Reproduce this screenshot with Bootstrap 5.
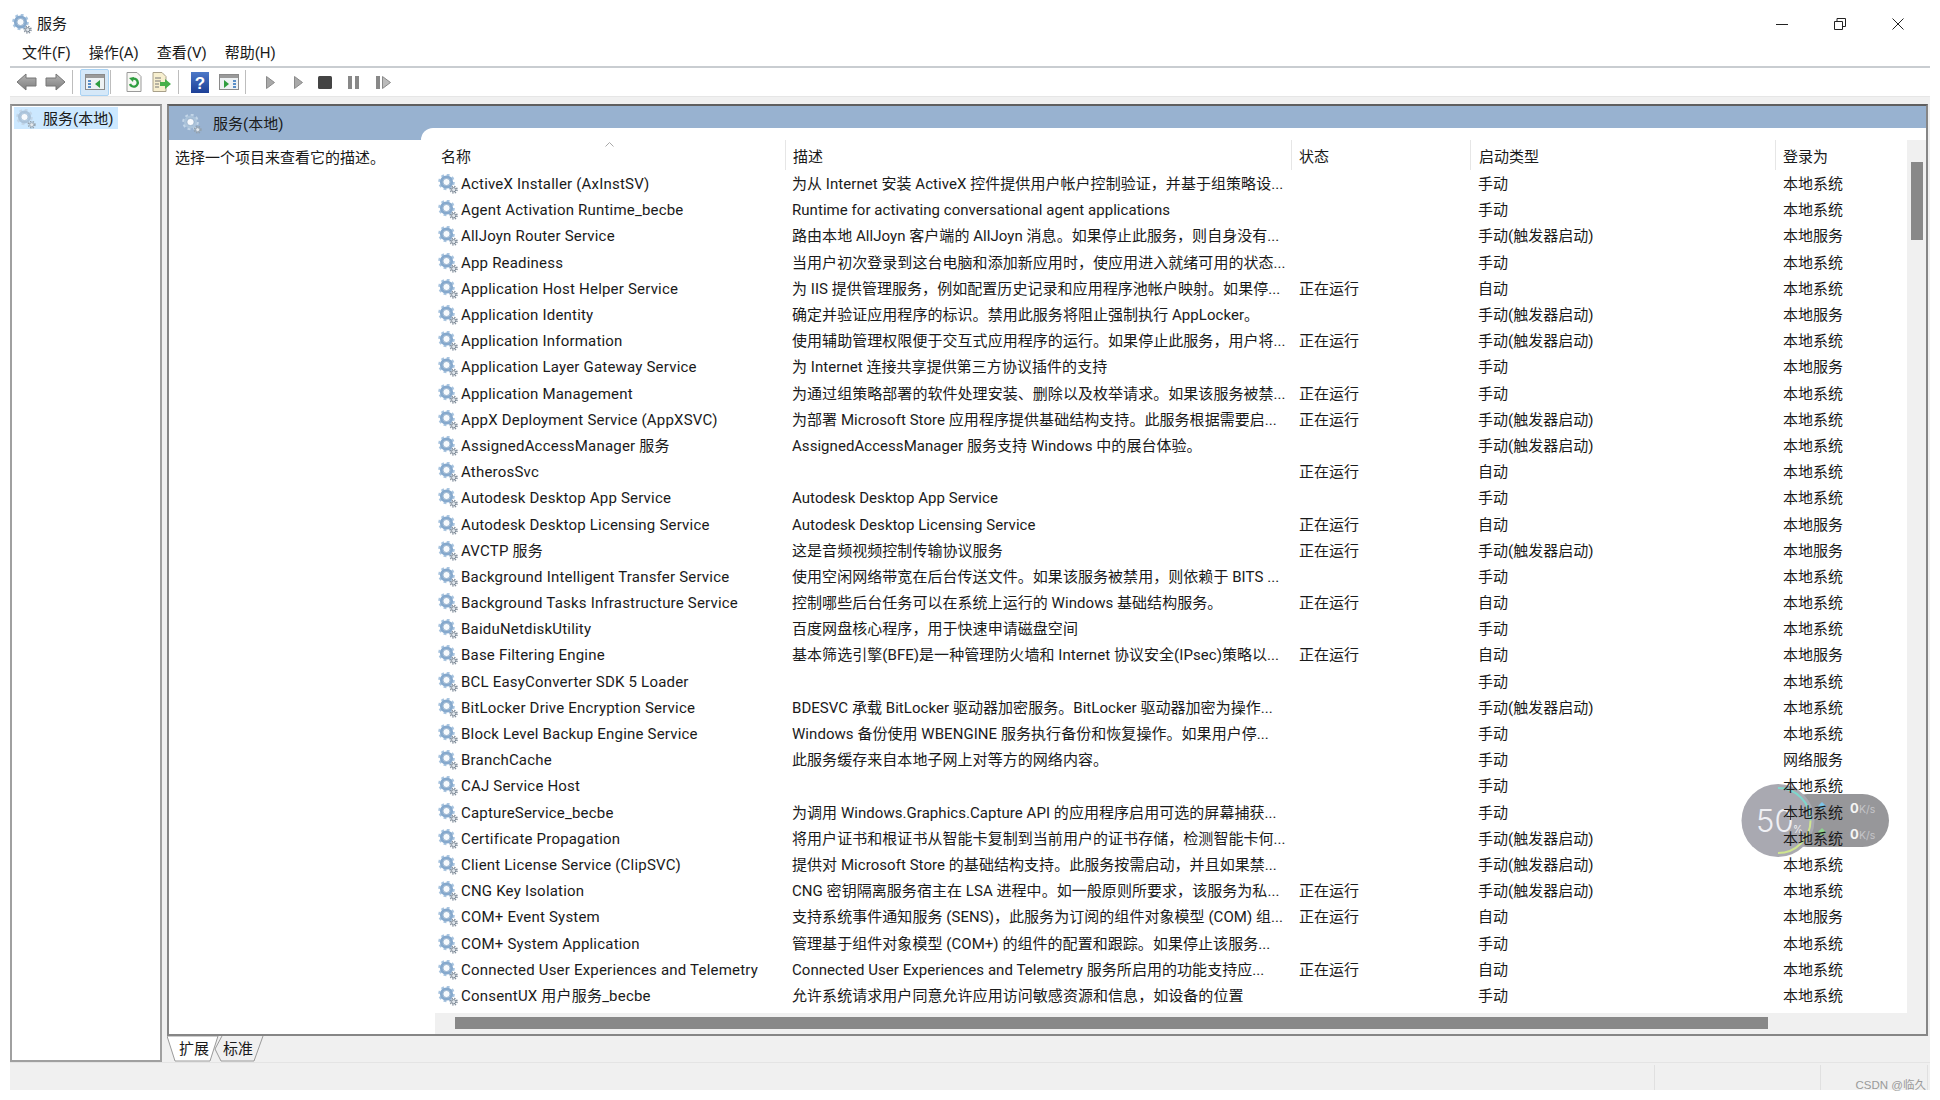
<!DOCTYPE html>
<html lang="zh-CN">
<head>
<meta charset="utf-8">
<title>服务</title>
<link href="https://cdn.jsdelivr.net/npm/bootstrap@5.3.0/dist/css/bootstrap.min.css" rel="stylesheet">
<style>
html,body{background:#fff;margin:0;height:1100px;overflow:hidden}
body{font-family:Roboto,"Noto Sans CJK SC",sans-serif;font-size:15px;color:#1a1a1a;line-height:1.2}
.win{margin-left:10px;width:1920px;height:1090px;position:relative}
.ttl{height:40px;margin-left:-10px;padding-left:12px;padding-top:8px}
.ttl-txt{margin-left:5px}
.winbtns{margin-left:auto;margin-right:26px;gap:46px}
.winbtns svg{width:12px;height:12px;display:block}
.mnu{height:28px;border-bottom:2px solid #c9cdd1;padding-left:12px;gap:18px}
.tools{height:28px;background:#fff}
.tb{display:block;flex:none}
.tsep{width:1px;height:24px;background:#bdbdbd;flex:none}
.tact{width:29px;height:27px;background:#d5e8f8;border:1px solid #a9d2f3;flex:none;border-radius:2px;margin-left:7px}
.tgap{height:8px;background:#f0f0f0;border-top:1px solid #e6e6e6}
.mainarea{height:958px;background:#f0f0f0}
.lpane{width:152px;background:#fff;border:2px solid #a0a0a0;border-top-color:#8c8c8c;padding:1px 2px;flex:none}
.ltree{background:#cce8ff;width:104px;height:22px;padding:1px 0 0 2px;gap:7px}
.rcol{width:1761px;margin-left:5px;flex:none}
.rpane{height:932px;border:2px solid #868686;border-top-color:#5f5f5f;background:#fff;flex:none}
.phead{height:34px;background:#98b2d0}
.phead-l{width:252px;padding:2px 0 0 13px;gap:11px;height:34px;flex:none}
.phead-notch{height:12px;background:#fff;border-top-left-radius:14px}
.pbody{height:894px}
.pdesc{width:266px;padding:9px 6px;flex:none}
.plist{width:1491px}
.ptop{height:873px}
.gridbox{width:1472px;flex:none}
.ghead{height:30px;position:relative;z-index:2}
.r1{width:350px;flex:none}
.r2{width:506px;flex:none}
.r3{width:179px;flex:none}
.r4{width:305px;flex:none}
.r5{width:132px;flex:none}
.ghead>div{border-left:1px solid #e6e6e6;padding:3px 0 0 7px;height:30px;display:flex;align-items:center;position:relative}
.ghead>div:first-child{border-left:0;padding-left:6px}
.ghead>.r4{padding-left:8px}
.sortmark{position:absolute;left:170px;top:2px;width:9px;height:5px}
.srow{height:26.2px;display:flex;align-items:center;white-space:nowrap;position:relative;z-index:2;padding-top:2px}
.srow>div{padding-left:7px}
.srow>.r1{padding-left:3px;display:flex;align-items:center;gap:3px;letter-spacing:.2px}
.srow>.r2{letter-spacing:.05px}
.srow>.r3,.srow>.r4,.srow>.r5{padding-left:8px}
.gicon{width:20px;height:20px;flex:none;display:block}
.vtrack{width:19px;background:#f0f0f0;flex:none;padding:22px 3px 0 4px}
.vthumb{height:78px;width:12px;background:#888}
.htrack{height:21px;background:#f0f0f0;padding:4px 0 0 20px}
.hthumb{width:1313px;height:12px;background:#888}
.tabsbar{height:26px;position:relative}
.tabsvg{position:absolute;left:0;top:0;width:110px;height:26px}
.tabtxt{position:relative;gap:14px;padding-left:12px;padding-top:4px}
.sbar{height:28px;background:#f0f0f0;border-top:1px solid #e4e4e4;position:relative}
.scell{position:absolute;top:2px;bottom:0;width:1px;background:#e0e0e0}
.sc1{left:1644px}.sc2{left:1810px}.sc3{left:1917px}
.wmark{position:absolute;right:4px;bottom:-3px;font-family:"Liberation Sans","Noto Sans CJK SC",sans-serif;font-size:11.5px;color:#9a9a9a}
.netw{position:absolute;left:1731px;top:783px;width:150px;height:75px;z-index:1}
</style>
</head>
<body>
<svg width="0" height="0" class="position-absolute">
<defs>
<symbol id="gear" viewBox="0 0 20 20">
<circle cx="8.5" cy="8" r="7" fill="none" stroke="#a9c5e0" stroke-width="2.6" stroke-dasharray="2.8 2.7"/>
<circle cx="8.5" cy="8" r="5.2" fill="none" stroke="#86a9cd" stroke-width="2.8"/>
<circle cx="8.5" cy="8" r="3.6" fill="#f7fafd" stroke="#6f94ba" stroke-width=".7"/>
<circle cx="15.7" cy="15.7" r="3.3" fill="none" stroke="#8692a0" stroke-width="1.6" stroke-dasharray="1.4 1.2"/>
<circle cx="15.7" cy="15.7" r="2.1" fill="#dfe5eb" stroke="#7d8995" stroke-width="1"/>
</symbol>
<symbol id="agear" viewBox="0 0 20 20">
<circle cx="8.5" cy="8" r="7" fill="none" stroke="#c3d6e8" stroke-width="2.6" stroke-dasharray="2.8 2.7"/>
<circle cx="8.5" cy="8" r="5.2" fill="none" stroke="#abc3da" stroke-width="2.6"/>
<circle cx="8.5" cy="8" r="3.6" fill="#f7fafd" stroke="#93adc7" stroke-width=".7"/>
<circle cx="15.7" cy="15.7" r="3.2" fill="none" stroke="#93a0ab" stroke-width="1.5" stroke-dasharray="1.4 1.2"/>
<circle cx="15.7" cy="15.7" r="2" fill="#e4e9ee" stroke="#93a0ab" stroke-width=".8"/>
</symbol>
<linearGradient id="ga" x1="0" y1="0" x2="0" y2="1"><stop offset="0" stop-color="#b4b4b4"/><stop offset="1" stop-color="#7e7e7e"/></linearGradient>
<linearGradient id="gh" x1="0" y1="0" x2="0" y2="1"><stop offset="0" stop-color="#4d79c8"/><stop offset="1" stop-color="#1c3f96"/></linearGradient>
</defs>
</svg>
<div class="win">
  <div class="ttl d-flex align-items-center">
    <svg class="gicon"><use href="#gear"/></svg><span class="ttl-txt">服务</span>
    <div class="winbtns d-flex align-items-center">
      <svg viewBox="0 0 12 12"><path d="M0 6.5H12" stroke="#222" stroke-width="1"/></svg>
      <svg viewBox="0 0 12 12"><path d="M.5 3.5H8.5V11.5H.5ZM3 3.5V.5H11.5V8.5H8.5" fill="none" stroke="#222" stroke-width="1"/></svg>
      <svg viewBox="0 0 12 12"><path d="M.5 .5L11.5 11.5M11.5 .5L.5 11.5" stroke="#222" stroke-width="1"/></svg>
    </div>
  </div>
  <div class="mnu d-flex align-items-center"><span>文件(F)</span><span>操作(A)</span><span>查看(V)</span><span>帮助(H)</span></div>
  <div class="tools d-flex align-items-center">
    <svg class="tb" style="margin-left:6px" width="21" height="20" viewBox="0 0 21 20"><path d="M1 10L10 2V6H20V14H10V18Z" fill="url(#ga)" stroke="#777"/></svg>
    <svg class="tb ms-2" width="21" height="20" viewBox="0 0 21 20"><path d="M20 10L11 2V6H1V14H11V18Z" fill="url(#ga)" stroke="#777"/></svg>
    <div class="tsep" style="margin-left:6px"></div>
    <div class="tact d-flex align-items-center justify-content-center">
      <svg width="20" height="16" viewBox="0 0 20 16"><rect x=".5" y=".5" width="19" height="15" fill="#eef2f4" stroke="#8a8a8a"/><rect x="1" y="1" width="18" height="3" fill="#9a9a9a"/><rect x="3" y="6" width="3" height="2" fill="#5a8fc8"/><rect x="3" y="9" width="3" height="2" fill="#5a8fc8"/><rect x="3" y="12" width="3" height="2" fill="#5a8fc8"/><path d="M15 6V14L10 10Z" fill="#2f9e3f"/></svg>
    </div>
    <div class="tsep" style="margin-left:1px"></div>
    <svg class="tb" style="margin-left:15px" width="16" height="20" viewBox="0 0 16 20"><path d="M1 .5H11L15 4.5V19.5H1Z" fill="#f8f8f4" stroke="#9a9a9a"/><path d="M4 12A4 4 0 1 0 6 7" fill="none" stroke="#2f9e3f" stroke-width="2.4"/><path d="M3 6L8 5L7 10Z" fill="#2f9e3f"/></svg>
    <svg class="tb" style="margin-left:10px" width="20" height="20" viewBox="0 0 20 20"><path d="M1 .5H10L14 4.5V19.5H1Z" fill="#f7efcf" stroke="#a8a08a"/><path d="M3 6H9M3 9H9M3 12H7M3 15H7" stroke="#777"/><path d="M8 10H13V7L19 12L13 17V14H8Z" fill="#46b04a"/></svg>
    <div class="tsep" style="margin-left:6px"></div>
    <svg class="tb" style="margin-left:12px" width="18" height="21" viewBox="0 0 18 21"><rect width="18" height="21" fill="url(#gh)"/><text x="9" y="16.5" text-anchor="middle" font-family="Liberation Sans" font-weight="700" font-size="17" fill="#fff">?</text></svg>
    <svg class="tb" style="margin-left:10px" width="20" height="16" viewBox="0 0 20 16"><rect x=".5" y=".5" width="19" height="15" fill="#eef2f4" stroke="#8a8a8a"/><rect x="1" y="1" width="18" height="3" fill="#9a9a9a"/><path d="M5 6V14L10 10Z" fill="#2f9e3f"/><rect x="14" y="6" width="3" height="2" fill="#5a8fc8"/><rect x="14" y="9" width="3" height="2" fill="#5a8fc8"/><rect x="14" y="12" width="3" height="2" fill="#5a8fc8"/></svg>
    <div class="tsep" style="margin-left:6px"></div>
    <svg class="tb" style="margin-left:20px" width="9" height="13" viewBox="0 0 9 13"><path d="M.5 .5L8.5 6.5L.5 12.5Z" fill="#a9a9a9" stroke="#8a8a8a"/></svg>
    <svg class="tb" style="margin-left:19px" width="9" height="13" viewBox="0 0 9 13"><path d="M.5 .5L8.5 6.5L.5 12.5Z" fill="#a9a9a9" stroke="#8a8a8a"/></svg>
    <svg class="tb" style="margin-left:15px" width="14" height="13" viewBox="0 0 14 13"><rect width="14" height="13" rx="1.5" fill="#444"/></svg>
    <svg class="tb" style="margin-left:16px" width="11" height="13" viewBox="0 0 11 13"><rect width="4" height="13" fill="#888"/><rect x="7" width="4" height="13" fill="#888"/></svg>
    <svg class="tb" style="margin-left:17px" width="15" height="13" viewBox="0 0 15 13"><rect width="4" height="13" fill="#888"/><path d="M6.5 .5L14.5 6.5L6.5 12.5Z" fill="#bbb" stroke="#8a8a8a"/></svg>
  </div>
  <div class="tgap"></div>
  <div class="mainarea d-flex">
    <div class="lpane"><div class="ltree d-flex align-items-center"><svg class="gicon"><use href="#agear"/></svg><span>服务(本地)</span></div></div>
    <div class="rcol d-flex flex-column">
      <div class="rpane d-flex flex-column">
        <div class="phead d-flex">
          <div class="phead-l d-flex align-items-center"><svg class="gicon"><use href="#agear"/></svg><span>服务(本地)</span></div>
          <div class="phead-notch flex-grow-1 align-self-end"></div>
        </div>
        <div class="pbody d-flex">
          <div class="pdesc">选择一个项目来查看它的描述。</div>
          <div class="plist d-flex flex-column">
            <div class="ptop d-flex">
              <div class="gridbox">
                <div class="ghead d-flex">
                  <div class="r1">名称<svg class="sortmark" viewBox="0 0 9 5"><path d="M.5 4.5L4.5 .5L8.5 4.5" fill="none" stroke="#a8a8a8"/></svg></div><div class="r2">描述</div><div class="r3">状态</div><div class="r4">启动类型</div><div class="r5">登录为</div>
                </div>
                <div class="srow"><div class="r1"><svg class="gicon"><use href="#gear"/></svg>ActiveX Installer (AxInstSV)</div><div class="r2">为从 Internet 安装 ActiveX 控件提供用户帐户控制验证，并基于组策略设...</div><div class="r3"></div><div class="r4">手动</div><div class="r5">本地系统</div></div>
                <div class="srow"><div class="r1"><svg class="gicon"><use href="#gear"/></svg>Agent Activation Runtime_becbe</div><div class="r2">Runtime for activating conversational agent applications</div><div class="r3"></div><div class="r4">手动</div><div class="r5">本地系统</div></div>
                <div class="srow"><div class="r1"><svg class="gicon"><use href="#gear"/></svg>AllJoyn Router Service</div><div class="r2">路由本地 AllJoyn 客户端的 AllJoyn 消息。如果停止此服务，则自身没有...</div><div class="r3"></div><div class="r4">手动(触发器启动)</div><div class="r5">本地服务</div></div>
                <div class="srow"><div class="r1"><svg class="gicon"><use href="#gear"/></svg>App Readiness</div><div class="r2">当用户初次登录到这台电脑和添加新应用时，使应用进入就绪可用的状态...</div><div class="r3"></div><div class="r4">手动</div><div class="r5">本地系统</div></div>
                <div class="srow"><div class="r1"><svg class="gicon"><use href="#gear"/></svg>Application Host Helper Service</div><div class="r2">为 IIS 提供管理服务，例如配置历史记录和应用程序池帐户映射。如果停...</div><div class="r3">正在运行</div><div class="r4">自动</div><div class="r5">本地系统</div></div>
                <div class="srow"><div class="r1"><svg class="gicon"><use href="#gear"/></svg>Application Identity</div><div class="r2">确定并验证应用程序的标识。禁用此服务将阻止强制执行 AppLocker。</div><div class="r3"></div><div class="r4">手动(触发器启动)</div><div class="r5">本地服务</div></div>
                <div class="srow"><div class="r1"><svg class="gicon"><use href="#gear"/></svg>Application Information</div><div class="r2">使用辅助管理权限便于交互式应用程序的运行。如果停止此服务，用户将...</div><div class="r3">正在运行</div><div class="r4">手动(触发器启动)</div><div class="r5">本地系统</div></div>
                <div class="srow"><div class="r1"><svg class="gicon"><use href="#gear"/></svg>Application Layer Gateway Service</div><div class="r2">为 Internet 连接共享提供第三方协议插件的支持</div><div class="r3"></div><div class="r4">手动</div><div class="r5">本地服务</div></div>
                <div class="srow"><div class="r1"><svg class="gicon"><use href="#gear"/></svg>Application Management</div><div class="r2">为通过组策略部署的软件处理安装、删除以及枚举请求。如果该服务被禁...</div><div class="r3">正在运行</div><div class="r4">手动</div><div class="r5">本地系统</div></div>
                <div class="srow"><div class="r1"><svg class="gicon"><use href="#gear"/></svg>AppX Deployment Service (AppXSVC)</div><div class="r2">为部署 Microsoft Store 应用程序提供基础结构支持。此服务根据需要启...</div><div class="r3">正在运行</div><div class="r4">手动(触发器启动)</div><div class="r5">本地系统</div></div>
                <div class="srow"><div class="r1"><svg class="gicon"><use href="#gear"/></svg>AssignedAccessManager 服务</div><div class="r2">AssignedAccessManager 服务支持 Windows 中的展台体验。</div><div class="r3"></div><div class="r4">手动(触发器启动)</div><div class="r5">本地系统</div></div>
                <div class="srow"><div class="r1"><svg class="gicon"><use href="#gear"/></svg>AtherosSvc</div><div class="r2"></div><div class="r3">正在运行</div><div class="r4">自动</div><div class="r5">本地系统</div></div>
                <div class="srow"><div class="r1"><svg class="gicon"><use href="#gear"/></svg>Autodesk Desktop App Service</div><div class="r2">Autodesk Desktop App Service</div><div class="r3"></div><div class="r4">手动</div><div class="r5">本地系统</div></div>
                <div class="srow"><div class="r1"><svg class="gicon"><use href="#gear"/></svg>Autodesk Desktop Licensing Service</div><div class="r2">Autodesk Desktop Licensing Service</div><div class="r3">正在运行</div><div class="r4">自动</div><div class="r5">本地服务</div></div>
                <div class="srow"><div class="r1"><svg class="gicon"><use href="#gear"/></svg>AVCTP 服务</div><div class="r2">这是音频视频控制传输协议服务</div><div class="r3">正在运行</div><div class="r4">手动(触发器启动)</div><div class="r5">本地服务</div></div>
                <div class="srow"><div class="r1"><svg class="gicon"><use href="#gear"/></svg>Background Intelligent Transfer Service</div><div class="r2">使用空闲网络带宽在后台传送文件。如果该服务被禁用，则依赖于 BITS ...</div><div class="r3"></div><div class="r4">手动</div><div class="r5">本地系统</div></div>
                <div class="srow"><div class="r1"><svg class="gicon"><use href="#gear"/></svg>Background Tasks Infrastructure Service</div><div class="r2">控制哪些后台任务可以在系统上运行的 Windows 基础结构服务。</div><div class="r3">正在运行</div><div class="r4">自动</div><div class="r5">本地系统</div></div>
                <div class="srow"><div class="r1"><svg class="gicon"><use href="#gear"/></svg>BaiduNetdiskUtility</div><div class="r2">百度网盘核心程序，用于快速申请磁盘空间</div><div class="r3"></div><div class="r4">手动</div><div class="r5">本地系统</div></div>
                <div class="srow"><div class="r1"><svg class="gicon"><use href="#gear"/></svg>Base Filtering Engine</div><div class="r2">基本筛选引擎(BFE)是一种管理防火墙和 Internet 协议安全(IPsec)策略以...</div><div class="r3">正在运行</div><div class="r4">自动</div><div class="r5">本地服务</div></div>
                <div class="srow"><div class="r1"><svg class="gicon"><use href="#gear"/></svg>BCL EasyConverter SDK 5 Loader</div><div class="r2"></div><div class="r3"></div><div class="r4">手动</div><div class="r5">本地系统</div></div>
                <div class="srow"><div class="r1"><svg class="gicon"><use href="#gear"/></svg>BitLocker Drive Encryption Service</div><div class="r2">BDESVC 承载 BitLocker 驱动器加密服务。BitLocker 驱动器加密为操作...</div><div class="r3"></div><div class="r4">手动(触发器启动)</div><div class="r5">本地系统</div></div>
                <div class="srow"><div class="r1"><svg class="gicon"><use href="#gear"/></svg>Block Level Backup Engine Service</div><div class="r2">Windows 备份使用 WBENGINE 服务执行备份和恢复操作。如果用户停...</div><div class="r3"></div><div class="r4">手动</div><div class="r5">本地系统</div></div>
                <div class="srow"><div class="r1"><svg class="gicon"><use href="#gear"/></svg>BranchCache</div><div class="r2">此服务缓存来自本地子网上对等方的网络内容。</div><div class="r3"></div><div class="r4">手动</div><div class="r5">网络服务</div></div>
                <div class="srow"><div class="r1"><svg class="gicon"><use href="#gear"/></svg>CAJ Service Host</div><div class="r2"></div><div class="r3"></div><div class="r4">手动</div><div class="r5">本地系统</div></div>
                <div class="srow"><div class="r1"><svg class="gicon"><use href="#gear"/></svg>CaptureService_becbe</div><div class="r2">为调用 Windows.Graphics.Capture API 的应用程序启用可选的屏幕捕获...</div><div class="r3"></div><div class="r4">手动</div><div class="r5">本地系统</div></div>
                <div class="srow"><div class="r1"><svg class="gicon"><use href="#gear"/></svg>Certificate Propagation</div><div class="r2">将用户证书和根证书从智能卡复制到当前用户的证书存储，检测智能卡何...</div><div class="r3"></div><div class="r4">手动(触发器启动)</div><div class="r5">本地系统</div></div>
                <div class="srow"><div class="r1"><svg class="gicon"><use href="#gear"/></svg>Client License Service (ClipSVC)</div><div class="r2">提供对 Microsoft Store 的基础结构支持。此服务按需启动，并且如果禁...</div><div class="r3"></div><div class="r4">手动(触发器启动)</div><div class="r5">本地系统</div></div>
                <div class="srow"><div class="r1"><svg class="gicon"><use href="#gear"/></svg>CNG Key Isolation</div><div class="r2">CNG 密钥隔离服务宿主在 LSA 进程中。如一般原则所要求，该服务为私...</div><div class="r3">正在运行</div><div class="r4">手动(触发器启动)</div><div class="r5">本地系统</div></div>
                <div class="srow"><div class="r1"><svg class="gicon"><use href="#gear"/></svg>COM+ Event System</div><div class="r2">支持系统事件通知服务 (SENS)，此服务为订阅的组件对象模型 (COM) 组...</div><div class="r3">正在运行</div><div class="r4">自动</div><div class="r5">本地服务</div></div>
                <div class="srow"><div class="r1"><svg class="gicon"><use href="#gear"/></svg>COM+ System Application</div><div class="r2">管理基于组件对象模型 (COM+) 的组件的配置和跟踪。如果停止该服务...</div><div class="r3"></div><div class="r4">手动</div><div class="r5">本地系统</div></div>
                <div class="srow"><div class="r1"><svg class="gicon"><use href="#gear"/></svg>Connected User Experiences and Telemetry</div><div class="r2">Connected User Experiences and Telemetry 服务所启用的功能支持应...</div><div class="r3">正在运行</div><div class="r4">自动</div><div class="r5">本地系统</div></div>
                <div class="srow"><div class="r1"><svg class="gicon"><use href="#gear"/></svg>ConsentUX 用户服务_becbe</div><div class="r2">允许系统请求用户同意允许应用访问敏感资源和信息，如设备的位置</div><div class="r3"></div><div class="r4">手动</div><div class="r5">本地系统</div></div>
              </div>
              <div class="vtrack"><div class="vthumb"></div></div>
            </div>
            <div class="htrack"><div class="hthumb"></div></div>
          </div>
        </div>
      </div>
      <div class="tabsbar">
        <svg class="tabsvg" viewBox="0 0 110 26"><path d="M0 0L8 25H43L51 0Z" fill="#fff" stroke="#9a9a9a"/><path d="M48 13L54 25H87L96 0M48 13L55 0" fill="#f0f0f0" stroke="#9a9a9a"/></svg>
        <div class="tabtxt d-flex"><span>扩展</span><span>标准</span></div>
      </div>
    </div>
  </div>
  <div class="sbar"><div class="scell sc1"></div><div class="scell sc2"></div><div class="scell sc3"></div></div>
  <div class="netw">
    <svg width="150" height="75" viewBox="0 0 150 75">
      <rect x="40" y="11" width="108" height="53" rx="26.5" fill="#97979a"/>
      <circle cx="37" cy="37.5" r="36.5" fill="#a9a9b1"/>
      <path d="M37 5A32.5 32.5 0 0 1 69.5 37.5" fill="none" stroke="#7fd6cc" stroke-width="2"/>
      <path d="M69.5 37.5A32.5 32.5 0 0 1 37 70" fill="none" stroke="#cfe58f" stroke-width="2"/>
      <text x="15" y="49" font-family="Inter" font-weight="300" font-size="31" fill="#f0f0f4">50</text>
      <text x="52" y="50" font-family="Inter" font-size="10" fill="#f0f0f4">%</text>
      <path d="M81 19L85 23L81 27L77 23Z" fill="#7cc4ea"/>
      <path d="M81 45L85 49L81 53L77 49Z" fill="#8fd28f"/>
      <text x="109" y="30" font-family="Inter" font-weight="700" font-size="13" fill="#f4f4f4">0</text>
      <text x="118" y="30" font-family="Inter" font-size="10.5" fill="#c4c4c8">K/s</text>
      <text x="109" y="56" font-family="Inter" font-weight="700" font-size="13" fill="#f4f4f4">0</text>
      <text x="118" y="56" font-family="Inter" font-size="10.5" fill="#c4c4c8">K/s</text>
    </svg>
  </div>
  <div class="wmark">CSDN @临久</div>
</div>
</body>
</html>
